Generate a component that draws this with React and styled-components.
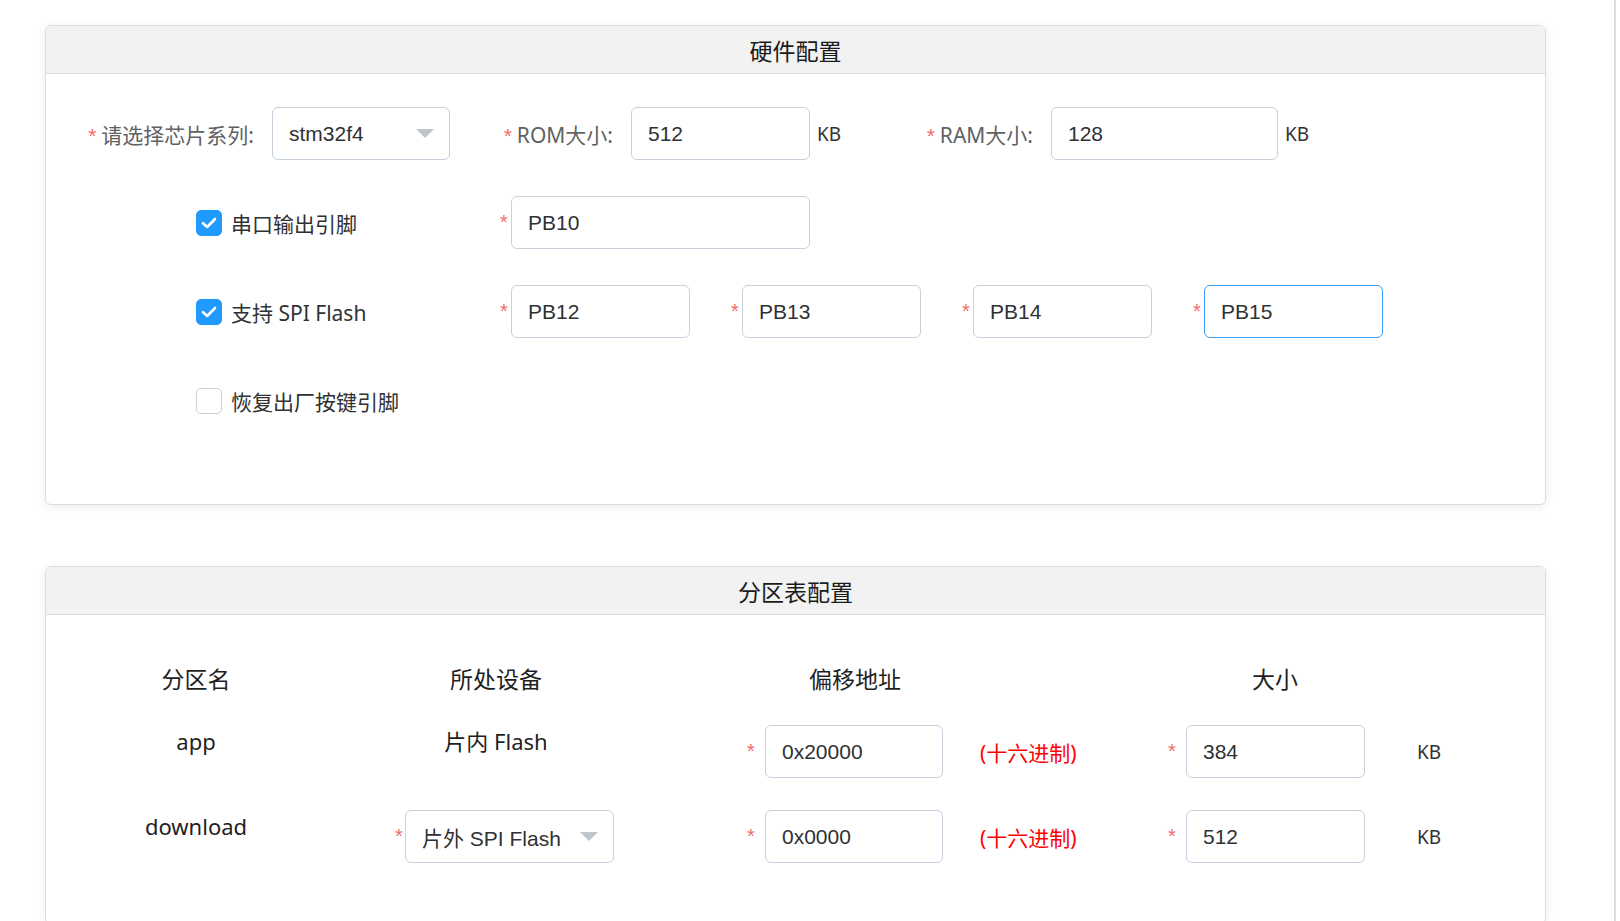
import React from 'react';
import styled, { createGlobalStyle } from 'styled-components';

const Global = createGlobalStyle`
  body {
    margin: 0;
    background: #fff;
    font-family: "Noto Sans", "Noto Sans CJK SC", sans-serif;
  }
`;

const Arrow = () => (
  <svg width="18" height="9" viewBox="0 0 18 9">
    <path d="M0 0 L18 0 L9 9 Z" fill="#c0c4cc" />
  </svg>
);

const Tick = () => (
  <svg width="16" height="12" viewBox="0 0 16 12">
    <path d="M2 6.2 L6.2 10 L14 2" fill="none" stroke="#fff" strokeWidth="2.6" strokeLinecap="round" strokeLinejoin="round" />
  </svg>
);

const Select = ({ value, width }) => (
  <SelectBox $w={width}>
    <span>{value}</span>
    <Arrow />
  </SelectBox>
);

const CheckItem = ({ checked, label }) => (
  <CheckCol>
    <Box $on={checked}>{checked && <Tick />}</Box>
    <CheckLabel>{label}</CheckLabel>
  </CheckCol>
);

const Pin = ({ value, width = 179, focused }) => (
  <PinField>
    <PinStar>*</PinStar>
    <Input readOnly value={value} $w={width} $focus={focused} />
  </PinField>
);

const App = () => (
  <Page>
    <Global />
    <Card>
      <CardHeader>硬件配置</CardHeader>
      <HardwareBody>
        <FormRow>
          <FormItem>
            <Label $w={226}><Star>*</Star>请选择芯片系列:</Label>
            <Select value="stm32f4" width={178} />
          </FormItem>
          <FormItem>
            <Label $w={181}><Star>*</Star>ROM大小:</Label>
            <Input readOnly value="512" $w={179} />
            <Unit>KB</Unit>
          </FormItem>
          <FormItem>
            <Label $w={211}><Star>*</Star>RAM大小:</Label>
            <Input readOnly value="128" $w={227} />
            <Unit>KB</Unit>
          </FormItem>
        </FormRow>
        <FormRow>
          <CheckItem checked label="串口输出引脚" />
          <Pin value="PB10" width={299} />
        </FormRow>
        <FormRow>
          <CheckItem checked label="支持 SPI Flash" />
          <PinGroup>
            <Pin value="PB12" />
            <Pin value="PB13" />
            <Pin value="PB14" />
            <Pin value="PB15" focused />
          </PinGroup>
        </FormRow>
        <FormRow>
          <CheckItem label="恢复出厂按键引脚" />
        </FormRow>
      </HardwareBody>
    </Card>

    <Card>
      <CardHeader>分区表配置</CardHeader>
      <TableBody>
        <HeadRow>
          <HeadCell $w={300}>分区名</HeadCell>
          <HeadCell $w={300}>所处设备</HeadCell>
          <HeadCell $w={418}>偏移地址</HeadCell>
          <HeadCell $w={422}>大小</HeadCell>
        </HeadRow>
        {[
          { name: 'app', device: '片内 Flash', offset: '0x20000', size: '384' },
          { name: 'download', select: '片外 SPI Flash', offset: '0x0000', size: '512' },
        ].map((r) => (
          <DataRow key={r.name}>
            <TextCell $w={300}>{r.name}</TextCell>
            {r.select ? (
              <DeviceCell>
                <TableStar $w={10}>*</TableStar>
                <Select value={r.select} width={209} />
              </DeviceCell>
            ) : (
              <TextCell $w={300}>{r.device}</TextCell>
            )}
            <OffsetCell>
              <TableStar>*</TableStar>
              <Input readOnly value={r.offset} $w={178} />
              <Hint>(十六进制)</Hint>
            </OffsetCell>
            <SizeCell>
              <TableStar>*</TableStar>
              <Input readOnly value={r.size} $w={179} />
              <TableUnit>KB</TableUnit>
            </SizeCell>
          </DataRow>
        ))}
      </TableBody>
    </Card>
  </Page>
);

export default App;

const Page = styled.div`
  width: 1616px;
  min-height: 100vh;
  box-sizing: border-box;
  border-right: 2px solid #dcdcdc;
  padding: 25px 0 40px 45px;
  display: flex;
  flex-direction: column;
  gap: 61px;
`;

const Card = styled.section`
  width: 1501px;
  box-sizing: border-box;
  border: 1px solid #d6dee8;
  border-radius: 6px;
  background: #fff;
  box-shadow: 0 2px 10px rgba(0, 0, 0, 0.08);
  overflow: hidden;
`;

const CardHeader = styled.div`
  height: 48px;
  box-sizing: border-box;
  background: #f2f2f2;
  border-bottom: 1px solid #d6dee8;
  display: flex;
  align-items: center;
  justify-content: center;
  font-family: "Noto Sans CJK SC", sans-serif;
  font-size: 23px;
  color: #1a1a1a;
`;

const HardwareBody = styled.div`
  padding: 33px 0 77px 0;
  display: flex;
  flex-direction: column;
  gap: 36px;
`;

const FormRow = styled.div`
  height: 53px;
  display: flex;
  align-items: center;
`;

const FormItem = styled.div`
  display: flex;
  align-items: center;
`;

const Label = styled.label`
  width: ${(p) => p.$w}px;
  box-sizing: border-box;
  padding-right: 18px;
  text-align: right;
  font-size: 21px;
  color: #606266;
  white-space: nowrap;
`;

const Star = styled.span`
  color: #f56c6c;
  font-family: "Liberation Sans", sans-serif;
  font-size: 21px;
  margin-right: 5px;
`;

const PinStar = styled.span`
  width: 11px;
  color: #f56c6c;
  font-family: "Liberation Sans", sans-serif;
  font-size: 20px;
`;

const Input = styled.input`
  width: ${(p) => p.$w}px;
  height: 53px;
  box-sizing: border-box;
  border: 1px solid ${(p) => (p.$focus ? '#3a9ff5' : '#c6d1dd')};
  border-radius: 6px;
  padding: 0 16px;
  font-family: "Liberation Sans", "Noto Sans CJK SC", sans-serif;
  font-size: 21px;
  color: #303133;
  background: #fff;
  outline: none;
`;

const SelectBox = styled.div`
  width: ${(p) => p.$w}px;
  height: 53px;
  box-sizing: border-box;
  border: 1px solid #c6d1dd;
  border-radius: 6px;
  padding: 0 15px 0 16px;
  display: flex;
  align-items: center;
  justify-content: space-between;
  font-family: "Liberation Sans", "Noto Sans CJK SC", sans-serif;
  font-size: 21px;
  color: #303133;
`;

const Unit = styled.span`
  width: 30px;
  box-sizing: border-box;
  padding-left: 7px;
  font-size: 19px;
  color: #303133;
`;

const CheckCol = styled.div`
  margin-left: 150px;
  width: 304px;
  flex-shrink: 0;
  display: flex;
  align-items: center;
  gap: 9px;
`;

const Box = styled.span`
  width: 26px;
  height: 26px;
  box-sizing: border-box;
  border-radius: 5px;
  border: 1px solid ${(p) => (p.$on ? '#1f9bff' : '#c6d1dd')};
  background: ${(p) => (p.$on ? '#1f9bff' : '#fff')};
  display: flex;
  align-items: center;
  justify-content: center;
`;

const CheckLabel = styled.span`
  font-size: 21px;
  color: #303133;
`;

const PinGroup = styled.div`
  display: flex;
  gap: 41px;
`;

const PinField = styled.div`
  display: flex;
  align-items: center;
`;

const TableBody = styled.div`
  padding: 45px 0 60px 0;
  display: flex;
  flex-direction: column;
`;

const HeadRow = styled.div`
  display: flex;
  height: 36px;
  align-items: center;
  margin-bottom: 29px;
`;

const HeadCell = styled.div`
  width: ${(p) => p.$w}px;
  text-align: center;
  font-family: "Noto Sans CJK SC", sans-serif;
  font-size: 23px;
  color: #1f1f1f;
`;

const DataRow = styled.div`
  display: flex;
  align-items: flex-start;
  height: 53px;
  & + & {
    margin-top: 32px;
  }
`;

const TextCell = styled.div`
  width: ${(p) => p.$w}px;
  text-align: center;
  line-height: 32px;
  font-size: 22px;
  color: #1f1f1f;
`;

const DeviceCell = styled.div`
  width: 300px;
  box-sizing: border-box;
  padding-left: 49px;
  display: flex;
  align-items: center;
`;

const TableStar = styled.span`
  width: ${(p) => p.$w || 18}px;
  color: #f56c6c;
  font-family: "Liberation Sans", sans-serif;
  font-size: 20px;
`;

const OffsetCell = styled.div`
  width: 522px;
  box-sizing: border-box;
  padding-left: 101px;
  display: flex;
  align-items: center;
`;

const Hint = styled.span`
  margin-left: 37px;
  font-size: 21px;
  color: #ff0000;
`;

const SizeCell = styled.div`
  display: flex;
  align-items: center;
`;

const TableUnit = styled.span`
  margin-left: 52px;
  font-size: 19px;
  color: #303133;
`;
